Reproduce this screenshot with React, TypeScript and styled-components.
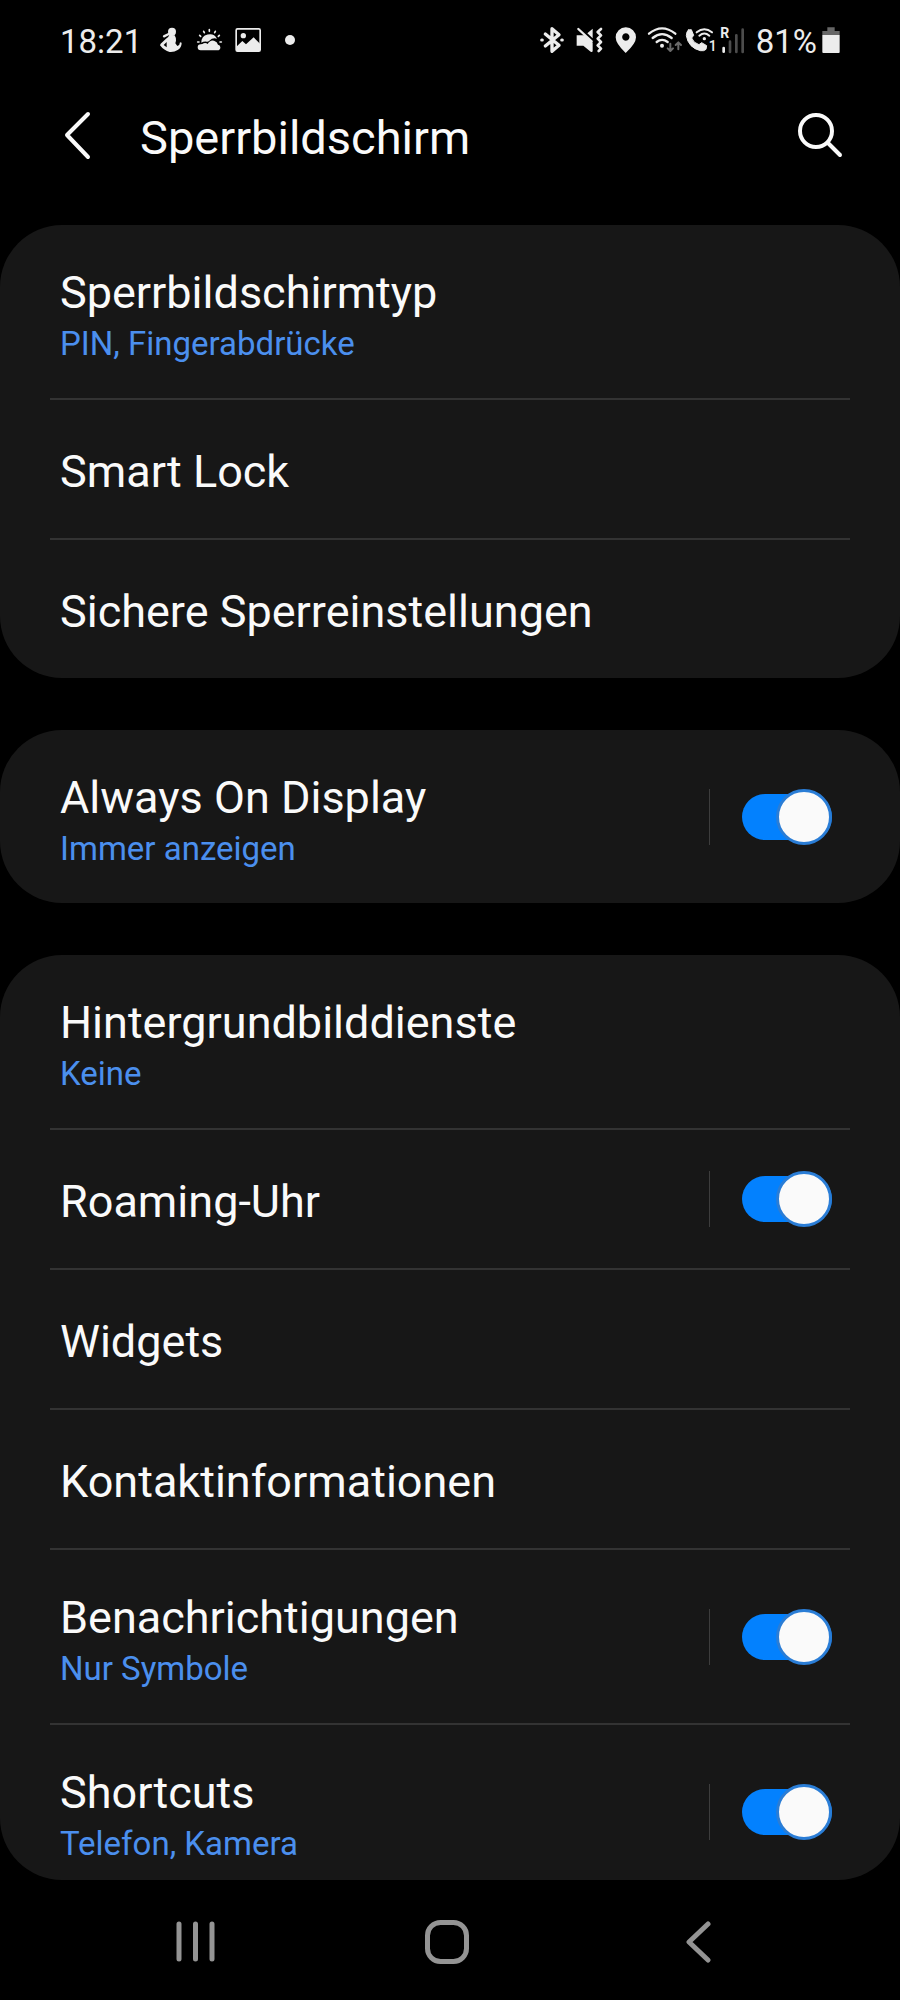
import { useState } from "react";
import type { ReactNode } from "react";
import styled, { createGlobalStyle } from "styled-components";

const GlobalStyle = createGlobalStyle`
  *, *::before, *::after { box-sizing: border-box; }
  html, body { margin: 0; background: #000; }
  body {
    color: #fafafa;
    font-family: Roboto, "Liberation Sans", sans-serif;
    -webkit-font-smoothing: antialiased;
  }
  button, input { font: inherit; color: inherit; }
`;

const Screen = styled.div`
  display: flex;
  flex-direction: column;
  min-height: 100vh;
  background: #000;
`;

const StatusBar = styled.div`
  display: flex;
  align-items: center;
  justify-content: space-between;
  height: 80px;
  padding: 0 60px;
  color: #ececec;
  font-size: 33px;
  line-height: 40px;
`;

const StatusGroup = styled.div`
  display: flex;
  align-items: center;
`;

const StatusText = styled.span<{ $gap: number }>`
  margin-right: ${(p) => p.$gap}px;
  padding-top: 3px;
`;

const StatusIcon = styled.svg`
  display: block;
  height: 40px;
  fill: none;
  stroke-linecap: round;
  stroke-linejoin: round;
`;

const Header = styled.header`
  display: flex;
  align-items: center;
  height: 112px;
  padding: 0 56px 0 60px;
`;

const IconButton = styled.button`
  display: flex;
  padding: 0;
  border: 0;
  background: none;
  cursor: pointer;
`;

const LineIcon = styled.svg`
  display: block;
  fill: none;
  stroke: currentColor;
  stroke-linecap: round;
  stroke-linejoin: round;
`;

const Heading = styled.h1`
  flex: 1;
  margin: 0 0 0 48px;
  padding-top: 4px;
  font-size: 47px;
  line-height: 56px;
  font-weight: 400;
`;

const Content = styled.main`
  display: flex;
  flex: 1;
  flex-direction: column;
  gap: 52px;
  padding-top: 33px;
`;

const Card = styled.section`
  overflow: hidden;
  border-radius: 62px;
  background: #171717;
`;

/* The row at the fold slides under the lower edge of its card. */
const Row = styled.div<{ $last: boolean; $cut?: boolean }>`
  display: flex;
  box-sizing: content-box;
  align-items: center;
  min-height: 138px;
  margin: 0 50px ${(p) => (p.$cut ? -18 : 0)}px;
  padding: 0 10px;
  border-bottom: ${(p) => (p.$last ? "0" : "2px solid #333")};
`;

const RowLink = styled.a`
  display: flex;
  flex: 1;
  flex-direction: column;
  gap: 5px;
  padding: 41px 0 35px;
  color: inherit;
  text-decoration: none;
`;

const RowTitle = styled.span`
  font-size: 45px;
  line-height: 54px;
`;

const RowNote = styled.span`
  color: #4b8fee;
  font-size: 33px;
  line-height: 38px;
`;

const SwitchArea = styled.div`
  display: flex;
  align-items: center;
  height: 56px;
  padding: 0 8px 0 32px;
  border-left: 1px solid #3d3d3d;
`;

const Switch = styled.input`
  display: flex;
  align-items: center;
  appearance: none;
  width: 90px;
  height: 46px;
  margin: 0;
  border-radius: 23px;
  background: #4a4a4a;
  cursor: pointer;

  &::before {
    content: "";
    width: 56px;
    height: 56px;
    flex: none;
    border: 3px solid #6a6a6a;
    border-radius: 50%;
    background: #fafafa;
  }

  &:checked {
    justify-content: flex-end;
    background: #0381fe;
  }

  &:checked::before {
    border-color: #2a7dd6;
  }
`;

const NavBar = styled.nav`
  display: flex;
  align-items: center;
  justify-content: space-between;
  height: 120px;
  padding: 4px 189px 0 176px;
  color: #949494;
`;

type GlyphProps = { x: number; w: number; children: ReactNode };

/* Status glyphs are drawn on a grid of three units per pixel. */
const Glyph = ({ x, w, children }: GlyphProps) => (
  <StatusIcon width={w} viewBox={`${x} 30 ${w * 3} 120`} aria-hidden="true">
    {children}
  </StatusIcon>
);

const INK = "#ececec";
const DIM = "#4c4c4c";

const StatusLeft = () => (
  <StatusGroup>
    <StatusText $gap={16}>18:21</StatusText>
    <Glyph x={354} w={36}>
      <circle cx="396" cy="65" r="12" fill={INK} />
      <path d="M372 79 L386 72" stroke={INK} strokeWidth="7" />
      <path
        d="M388 74 L404 76 Q409 84 408 92 L406 100 L412 108 Q420 105 420 97 L425 98 Q425 112 413 120 Q403 127 389 126 Q372 122 360 106 L362 101 L378 86 Q386 82 388 74 Z M380 96 L371 105 L380 112 Z"
        fill={INK}
        fillRule="evenodd"
      />
    </Glyph>
    <Glyph x={462} w={38}>
      <path
        d="M473 96 H477 M479 76 L482 79 M491 64 L493 68 M508 59 V64 M526 64 L524 68 M538 76 L535 79 M544 96 H540"
        stroke={INK}
        strokeWidth="5"
      />
      <path d="M484 98 A25 25 0 0 1 531 86 Q518 82 508 92 Q504 96 500 95 Q491 94 484 98Z" fill={INK} />
      <path
        d="M482 121 A9 9 0 0 1 482 103 Q488 103 491 100 Q498 98 503 102 Q510 89 522 92 Q532 95 534 104 A9 9 0 0 1 536 121 Z"
        fill={INK}
      />
    </Glyph>
    <Glyph x={576} w={48}>
      <rect x="588.5" y="56.5" width="72" height="67" rx="4" stroke={INK} strokeWidth="5" />
      <circle cx="610" cy="77" r="8" fill={INK} />
      <path d="M589 110 L607 93 L618 103 L641 82 L660 101 V123 H589 Z" fill={INK} />
    </Glyph>
    <Glyph x={720} w={20}>
      <circle cx="750" cy="90" r="15" fill={INK} />
    </Glyph>
  </StatusGroup>
);

const StatusRight = () => (
  <StatusGroup>
    <Glyph x={60} w={34}>
      <path d="M76 72 L117 106 L96 124 V56 L117 74 L76 108" stroke={INK} strokeWidth="10" />
      <path d="M65 90 H67 M125 90 H127" stroke={INK} strokeWidth="9" />
    </Glyph>
    <Glyph x={162} w={36}>
      <path d="M170 76 H194 L218 98 V124 Q216 128 212 125 L190 107 H170 Z M202 70 L218 56 V85 Z" fill={INK} />
      <path d="M175 57 L215 94" stroke={INK} strokeWidth="7" />
      <path
        d="M243 57 L233 66 L243 76 L233 86 L243 96 L233 106 L243 116 L236 123"
        stroke={INK}
        strokeWidth="8"
      />
    </Glyph>
    <Glyph x={270} w={36}>
      <path
        d="M317 129 Q287 101 287 82 A30 30 0 0 1 348 82 Q348 101 317 129 Z M317 70 A11 11 0 1 0 318 70 Z"
        fill={INK}
        fillRule="evenodd"
      />
    </Glyph>
    <Glyph x={378} w={38}>
      <path
        d="M387 71 Q426 39 466 71 M398 84 Q426 61 455 84 M410 96 Q426 83 443 96"
        stroke={INK}
        strokeWidth="7"
      />
      <circle cx="426" cy="107" r="6" fill={INK} />
      <path
        d="M451 101 V122 M443 115 L451 123 L459 115 M475 118 V98 M467 105 L475 97 L483 105"
        stroke="#6a6a6a"
        strokeWidth="6"
      />
    </Glyph>
    <Glyph x={492} w={36}>
      <path
        d="M505 60 L514 59 L521 76 L515 84 Q520 99 537 104 L545 98 L560 107 L558 118 Q552 124 541 122 Q505 113 499 77 Q499 65 505 60 Z"
        fill={INK}
        stroke={INK}
        strokeWidth="3"
      />
      <path d="M530 67 Q553 48 576 67 M538 77 Q553 64 568 77" stroke={INK} strokeWidth="6" />
      <circle cx="553" cy="86" r="5" fill={INK} />
      <text x="566" y="123" fontSize="42" fontWeight="500" fill={INK}>
        1
      </text>
    </Glyph>
    <Glyph x={600} w={36}>
      <text x="601" y="83" fontSize="42" fontWeight="700" fill={INK}>
        R
      </text>
      <path d="M611 114 V125" stroke={INK} strokeWidth="8" />
      <path d="M630 95 V126 M649 76 V126 M668 59 V126" stroke={DIM} strokeWidth="8" />
    </Glyph>
    <StatusText $gap={5}>81%</StatusText>
    <Glyph x={905} w={18}>
      <path d="M906 75 V63 H921 V52 H943 V63 H958 V75 Z" fill="#666" />
      <path d="M906 75 H958 V126 Q958 129 955 129 H909 Q906 129 906 126 Z" fill={INK} />
    </Glyph>
  </StatusGroup>
);

type Item = { title: string; note?: string; toggle?: boolean; cut?: boolean };

const groups: Item[][] = [
  [
    { title: "Sperrbildschirmtyp", note: "PIN, Fingerabdrücke" },
    { title: "Smart Lock" },
    { title: "Sichere Sperreinstellungen" },
  ],
  [{ title: "Always On Display", note: "Immer anzeigen", toggle: true }],
  [
    { title: "Hintergrundbilddienste", note: "Keine" },
    { title: "Roaming-Uhr", toggle: true },
    { title: "Widgets" },
    { title: "Kontaktinformationen" },
    { title: "Benachrichtigungen", note: "Nur Symbole", toggle: true },
    { title: "Shortcuts", note: "Telefon, Kamera", toggle: true, cut: true },
  ],
];

const SettingRow = ({ item, last }: { item: Item; last: boolean }) => {
  const [on, setOn] = useState(true);
  return (
    <Row $last={last} $cut={item.cut}>
      <RowLink href="#">
        <RowTitle>{item.title}</RowTitle>
        {item.note && <RowNote>{item.note}</RowNote>}
      </RowLink>
      {item.toggle && (
        <SwitchArea>
          <Switch
            type="checkbox"
            role="switch"
            aria-label={item.title}
            checked={on}
            onChange={(e) => setOn(e.target.checked)}
          />
        </SwitchArea>
      )}
    </Row>
  );
};

export default function App() {
  return (
    <Screen>
      <GlobalStyle />
      <StatusBar>
        <StatusLeft />
        <StatusRight />
      </StatusBar>
      <Header>
        <IconButton aria-label="Zurück">
          <LineIcon width="32" height="50" viewBox="0 0 32 50" strokeWidth="4">
            <path d="M28 3 L7 24 L28 46" />
          </LineIcon>
        </IconButton>
        <Heading>Sperrbildschirm</Heading>
        <IconButton aria-label="Suchen">
          <LineIcon width="48" height="48" viewBox="0 0 48 48" strokeWidth="4">
            <circle cx="20" cy="19" r="16" />
            <path d="M32 31 L44 43" />
          </LineIcon>
        </IconButton>
      </Header>
      <Content>
        {groups.map((items, g) => (
          <Card key={g}>
            {items.map((item, i) => (
              <SettingRow key={item.title} item={item} last={i === items.length - 1} />
            ))}
          </Card>
        ))}
      </Content>
      <NavBar>
        <IconButton aria-label="Letzte Apps">
          <LineIcon width="40" height="44" viewBox="0 0 40 44" strokeWidth="5">
            <path d="M3 4 V39 M19.5 4 V39 M36 4 V39" />
          </LineIcon>
        </IconButton>
        <IconButton aria-label="Startseite">
          <LineIcon width="44" height="44" viewBox="0 0 44 44" strokeWidth="5">
            <rect x="2.5" y="2.5" width="39" height="39" rx="13" />
          </LineIcon>
        </IconButton>
        <IconButton aria-label="Zurück">
          <LineIcon width="33" height="44" viewBox="0 0 33 44" strokeWidth="5">
            <path d="M30 4 L11 22 L30 40" />
          </LineIcon>
        </IconButton>
      </NavBar>
    </Screen>
  );
}
